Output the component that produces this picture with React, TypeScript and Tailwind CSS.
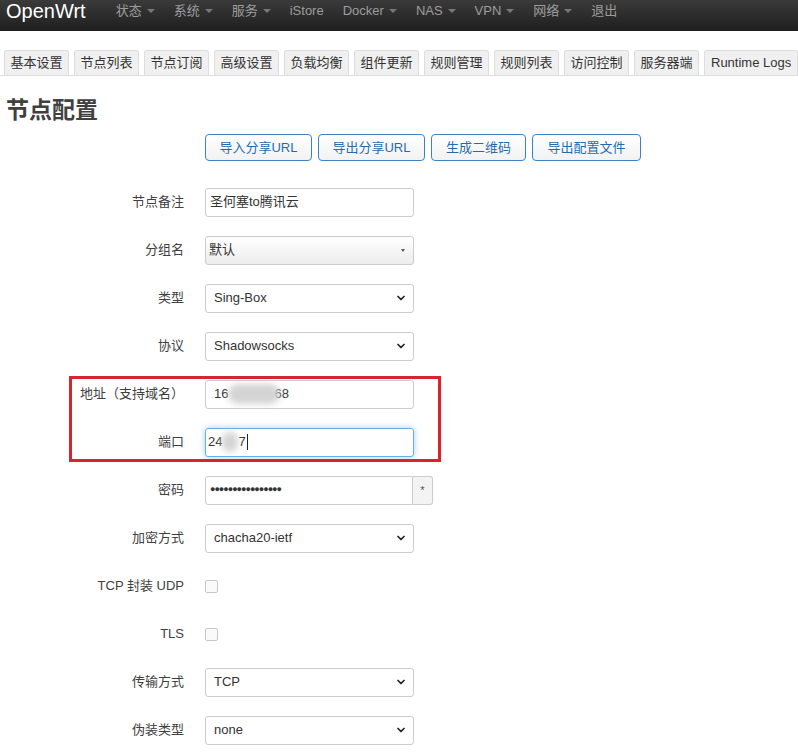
import { ChevronDown } from "lucide-react"

const navItems = [
  { label: "状态", caret: true },
  { label: "系统", caret: true },
  { label: "服务", caret: true },
  { label: "iStore", caret: false },
  { label: "Docker", caret: true },
  { label: "NAS", caret: true },
  { label: "VPN", caret: true },
  { label: "网络", caret: true },
  { label: "退出", caret: false },
]

const tabs = ["基本设置", "节点列表", "节点订阅", "高级设置", "负载均衡", "组件更新", "规则管理", "规则列表", "访问控制", "服务器端"]

const actions = [
  { label: "导入分享URL", w: "w-[107px]" },
  { label: "导出分享URL", w: "w-[107px]" },
  { label: "生成二维码", w: "w-[95px]" },
  { label: "导出配置文件", w: "w-[109px]" },
]

function Row({ label, children }: { label: string; children: React.ReactNode }) {
  return (
    <div className="flex h-[48px] items-center">
      <div className="w-[184px] text-right text-[13px] text-[#404040]">{label}</div>
      <div className="ml-[21px] flex items-center">{children}</div>
    </div>
  )
}

function Select({ value }: { value: string }) {
  return (
    <div className="flex h-[29px] w-[209px] items-center justify-between rounded-[3px] border border-[#ccc] bg-white pl-[8px] pr-[6px] text-[13px] text-[#333]">
      <span>{value}</span>
      <ChevronDown className="h-[12px] w-[12px] text-[#222]" strokeWidth={3.5} />
    </div>
  )
}

function Checkbox() {
  return <div className="h-[13px] w-[13px] rounded-[2px] border border-[#c8c8c8] bg-[#fafafa]" />
}

function Blur({ w }: { w: string }) {
  return <span className={`inline-block h-[20px] ${w} rounded-full bg-[#d4d4d4] blur-[3px] align-middle`} />
}

export default function App() {
  return (
    <div className="min-h-[752px] bg-white font-['Liberation_Sans','Noto_Sans_CJK_SC',sans-serif]">
      <div className="h-[31px] bg-gradient-to-b from-[#3a3a3a] to-[#1f1f1f]">
        <div className="flex h-[22px] items-center">
          <span className="ml-[6px] text-[20px] leading-none text-white">OpenWrt</span>
          <nav className="ml-[30px] flex items-center gap-[19px] text-[13px] text-[#9d9d9d]">
            {navItems.map((n) => (
              <span key={n.label} className="flex items-center whitespace-nowrap">
                {n.label}
                {n.caret && (
                  <span className="ml-[5px] inline-block border-x-[4px] border-t-[4px] border-x-transparent border-t-[#777]" />
                )}
              </span>
            ))}
          </nav>
        </div>
      </div>

      <div className="mt-[19px] flex h-[26px] items-end gap-[5px] overflow-hidden whitespace-nowrap border-b border-[#ddd] pl-[4px]">
        {tabs.map((t) => (
          <div
            key={t}
            className="flex h-[25px] w-[65px] shrink-0 items-center justify-center rounded-t-[3px] border border-b-0 border-[#ddd] bg-[#f0f0f0] text-[13px] text-[#333]"
          >
            {t}
          </div>
        ))}
        <div className="flex h-[25px] shrink-0 items-center rounded-t-[3px] border border-b-0 border-[#ddd] bg-[#f0f0f0] px-[6px] text-[13px] text-[#333]">
          Runtime Logs
        </div>
      </div>

      <h1 className="mt-[20px] ml-[6px] text-[23px] font-bold leading-[28px] text-[#404040]">节点配置</h1>

      <div className="mt-[10px] ml-[205px] flex gap-[6px]">
        {actions.map((a) => (
          <button
            key={a.label}
            className={`h-[27px] ${a.w} rounded-[4px] border border-[#3c82c8] bg-gradient-to-b from-white to-[#f2f2f2] text-[13px] text-[#1f6cb5]`}
          >
            {a.label}
          </button>
        ))}
      </div>

      <div className="mt-[17px]">
        <Row label="节点备注">
          <div className="flex h-[29px] w-[209px] items-center rounded-[3px] border border-[#ccc] px-[4px] text-[13px] text-[#333]">
            圣何塞to腾讯云
          </div>
        </Row>
        <Row label="分组名">
          <div className="flex h-[29px] w-[209px] items-center justify-between rounded-[3px] border border-[#ccc] bg-gradient-to-b from-white to-[#ececec] pl-[3px] pr-[8px] text-[13px] text-[#333]">
            <span>默认</span>
            <span className="inline-block border-x-[2.5px] border-t-[3px] border-x-transparent border-t-[#555]" />
          </div>
        </Row>
        <Row label="类型">
          <Select value="Sing-Box" />
        </Row>
        <Row label="协议">
          <Select value="Shadowsocks" />
        </Row>

        <div className="relative">
          <Row label="地址（支持域名）">
            <div className="flex h-[29px] w-[209px] items-center rounded-[3px] border border-[#ccc] px-[8px] text-[13px] text-[#333]">
              16
              <Blur w="w-[52px]" />
              <span className="-ml-[6px]">68</span>
            </div>
          </Row>
          <Row label="端口">
            <div className="flex h-[29px] w-[209px] items-center rounded-[3px] border border-[#66afe9] px-[2px] text-[13px] text-[#333] shadow-[0_0_6px_rgba(102,175,233,0.6)]">
              24
              <Blur w="w-[16px]" />
              7<span className="ml-[1px] h-[16px] w-px bg-[#222]" />
            </div>
          </Row>
          <div className="absolute left-[69px] top-[6px] bottom-[4px] w-[372px] border-[3px] border-[#d9232d]" />
        </div>

        <Row label="密码">
          <div className="flex h-[29px]">
            <div className="flex w-[208px] items-center rounded-l-[3px] border border-[#ccc] px-[4px] text-[9px] tracking-[-1px] text-[#333]">
              ●●●●●●●●●●●●●●●●
            </div>
            <div className="flex w-[20px] items-center justify-center rounded-r-[3px] border border-l-0 border-[#ccc] bg-[#f3f3f3] text-[11px] text-[#555]">
              *
            </div>
          </div>
        </Row>
        <Row label="加密方式">
          <Select value="chacha20-ietf" />
        </Row>
        <Row label="TCP 封装 UDP">
          <Checkbox />
        </Row>
        <Row label="TLS">
          <Checkbox />
        </Row>
        <Row label="传输方式">
          <Select value="TCP" />
        </Row>
        <Row label="伪装类型">
          <Select value="none" />
        </Row>
      </div>
    </div>
  )
}
